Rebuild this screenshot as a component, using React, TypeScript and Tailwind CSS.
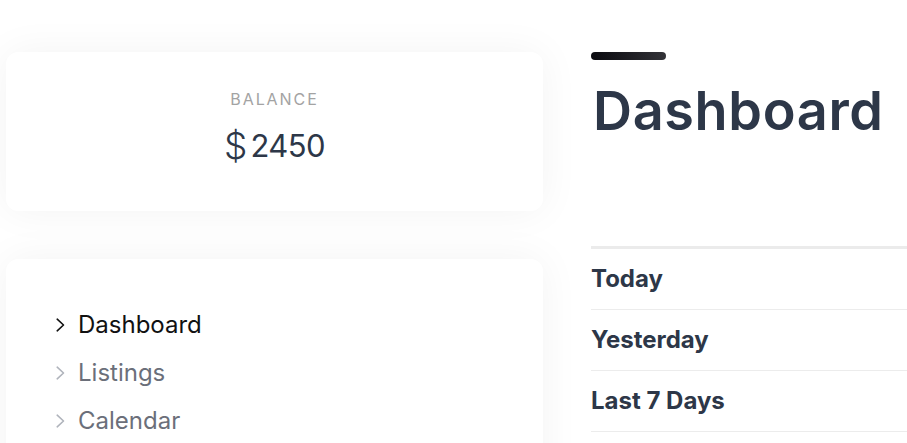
const navItems = [
  { label: 'Dashboard', active: true },
  { label: 'Listings', active: false },
  { label: 'Calendar', active: false },
];

const periods = ['Today', 'Yesterday', 'Last 7 Days'];

function Chevron({ className }: { className: string }) {
  return (
    <svg viewBox="0 0 9 14" className={className} fill="none" stroke="currentColor" strokeWidth={1.6}>
      <polyline points="1.2,1.2 7.5,7 1.2,12.8" strokeLinecap="round" strokeLinejoin="round" />
    </svg>
  );
}

export default function App() {
  return (
    <div className="min-h-screen overflow-hidden bg-white font-['Inter',sans-serif] text-[#2d3748]">
      <div className="flex pl-[6px] pt-[52px]">
        {/* sidebar */}
        <aside className="flex w-[537px] shrink-0 flex-col gap-12">
          <section className="flex flex-col items-center rounded-xl bg-white pt-[35px] pb-[47px] shadow-[0_0_40px_rgba(17,24,39,0.05)]">
            <p className="text-base leading-6 tracking-[0.12em] text-[#a3a3a3]">BALANCE</p>
            <p className="mt-4 flex items-center text-[31px] leading-none">
              <span className="mr-[3px] text-[37px] font-light leading-none">$</span>
              <span className="tracking-[-0.02em]">2450</span>
            </p>
          </section>

          <nav className="rounded-xl bg-white pt-[42px] pb-10 pl-[50px] shadow-[0_0_40px_rgba(17,24,39,0.05)]">
            <ul className="flex flex-col">
              {navItems.map((item) => (
                <li
                  key={item.label}
                  className={`flex h-12 items-center gap-[13px] text-2xl ${item.active ? 'text-[#111111]' : 'text-[#6b6f7a]'}`}
                >
                  <Chevron className={`h-[14px] w-[9px] ${item.active ? 'text-[#111111]' : 'text-[#b0b4bc]'}`} />
                  <span>{item.label}</span>
                </li>
              ))}
            </ul>
          </nav>
        </aside>

        {/* main */}
        <main className="ml-12 flex-1">
          <div className="h-2 w-[75px] rounded-full bg-gradient-to-r from-[#0b0b10] to-[#333338]" />
          <h1 className="mt-[24px] pl-[2px] text-[54px] font-semibold leading-none tracking-[0.012em]">Dashboard</h1>

          <div className="mt-[108px] border-t-[3px] border-[#ebebeb]">
            {periods.map((p) => (
              <div key={p} className="border-b border-[#ececec] pt-[14px] pb-[14px] text-2xl font-bold leading-8">
                {p}
              </div>
            ))}
          </div>
        </main>
      </div>
    </div>
  );
}
